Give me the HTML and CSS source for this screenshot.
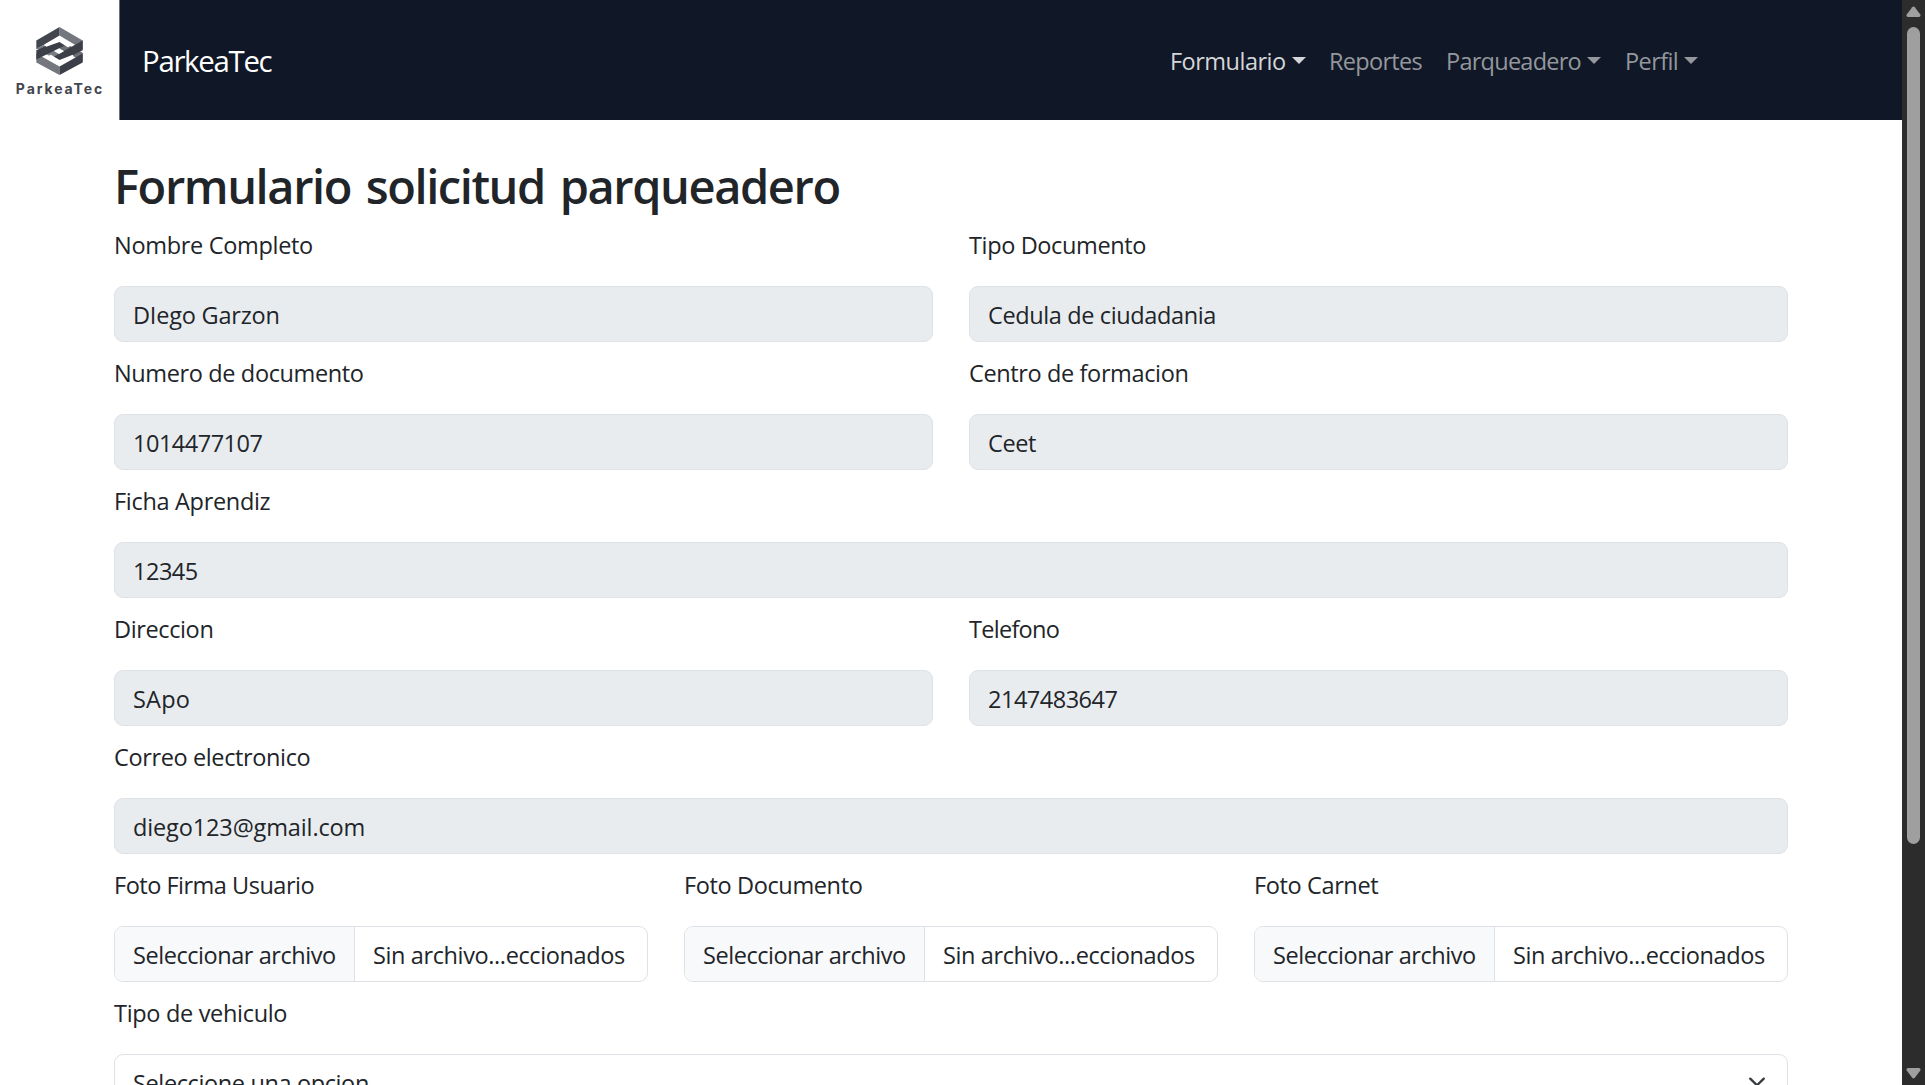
FILE: index.html
```html
<!DOCTYPE html>
<html lang="es">
<head>
<meta charset="utf-8">
<title>ParkeaTec</title>
<link rel="stylesheet" href="styles.css">
</head>
<body>
<div class="page">
  <nav class="navbar">
    <div class="logo">
      <svg class="logo-mark" viewBox="78 20 140 145" aria-hidden="true">
        <path fill="#74777e" d="M148 20 218 61V88L148 46Z"/>
        <path fill="#43464f" d="M148 20 78 61V87L148 46Z"/>
        <path fill="#7b7e84" d="M78 84 100 74 165 112 146 124Z"/>
        <path fill="#6d7077" d="M148 60 218 98V124L148 86Z"/>
        <path fill="#74777e" d="M78 100 148 139V165L78 127Z"/>
        <path fill="#3c3f48" d="M218 100V127L148 165V139Z"/>
        <path fill="#3c3f48" d="M78 90 148 60 172 72 78 118Z"/>
        <path fill="#3c3f48" d="M218 61V90L148 126 124 114Z"/>
        <path fill="#fff" d="M148 85 161 93 148 101 135 93Z"/>
        <path fill="#fff" d="M104 73 148 48 191 73 173 81 148 65 108 80Z"/>
        <path fill="#fff" d="M104 112 122 104 148 120 188 104 192 112 148 137Z"/>
      </svg>
      <span class="logo-name">ParkeaTec</span>
    </div>
    <span class="brand">ParkeaTec</span>
    <ul class="menu">
      <li class="menu-item active"><span class="w-form">Formulario</span><i class="caret"></i></li>
      <li class="menu-item"><span class="w-rep">Reportes</span></li>
      <li class="menu-item"><span class="w-parq">Parqueadero</span><i class="caret"></i></li>
      <li class="menu-item"><span class="w-perfil">Perfil</span><i class="caret"></i></li>
    </ul>
  </nav>
  <main class="container">
    <h1 class="title">Formulario solicitud parqueadero</h1>
    <form class="form">
      <div class="row">
        <div class="field"><label class="label t-loose">Nombre Completo</label><div class="control disabled t-wide">DIego Garzon</div></div>
        <div class="field"><label class="label">Tipo Documento</label><div class="control disabled">Cedula de ciudadania</div></div>
      </div>
      <div class="row">
        <div class="field"><label class="label">Numero de documento</label><div class="control disabled t-num">1014477107</div></div>
        <div class="field"><label class="label">Centro de formacion</label><div class="control disabled">Ceet</div></div>
      </div>
      <div class="row">
        <div class="field"><label class="label t-loose">Ficha Aprendiz</label><div class="control disabled t-num">12345</div></div>
      </div>
      <div class="row">
        <div class="field"><label class="label">Direccion</label><div class="control disabled t-wider">SApo</div></div>
        <div class="field"><label class="label t-tight">Telefono</label><div class="control disabled t-num">2147483647</div></div>
      </div>
      <div class="row">
        <div class="field"><label class="label">Correo electronico</label><div class="control disabled t-mail">diego123@gmail.com</div></div>
      </div>
      <div class="row">
        <div class="field"><label class="label t-num">Foto Firma Usuario</label><div class="file"><span class="file-button">Seleccionar archivo</span><span class="file-name">Sin archivo...eccionados</span></div></div>
        <div class="field"><label class="label">Foto Documento</label><div class="file"><span class="file-button">Seleccionar archivo</span><span class="file-name">Sin archivo...eccionados</span></div></div>
        <div class="field"><label class="label">Foto Carnet</label><div class="file"><span class="file-button">Seleccionar archivo</span><span class="file-name">Sin archivo...eccionados</span></div></div>
      </div>
      <div class="row">
        <div class="field"><label class="label t-loose">Tipo de vehiculo</label><div class="control select"><span>Seleccione una opcion</span>
          <svg class="chevron" viewBox="0 0 16 16" aria-hidden="true"><path fill="none" stroke="#343a40" stroke-linecap="round" stroke-linejoin="round" stroke-width="2" d="m2 5 6 6 6-6"/></svg></div></div>
      </div>
    </form>
  </main>
</div>
<aside class="scrollbar">
  <svg width="15" height="12" viewBox="0 0 15 12"><path fill="#9f9f9f" d="M6.2 1.2Q7.5-.3 8.8 1.2L14.3 8.6Q15 10.7 13 11H2Q0 10.7.7 8.6Z"/></svg>
  <div class="thumb"></div>
  <svg class="arrow-down" width="15" height="12" viewBox="0 0 15 12"><path fill="#9f9f9f" d="M6.2 10.8Q7.5 12.3 8.8 10.8L14.3 3.4Q15 1.3 13 1H2Q0 1.3.7 3.4Z"/></svg>
</aside>
</body>
</html>
```
FILE: styles.css
```css
* { box-sizing: border-box; }

body {
  margin: 0;
  height: 1085px;
  display: flex;
  overflow: hidden;
  background: #fff;
  color: #212529;
  font: 23.52px/36px "Open Sans", "Noto Sans", sans-serif;
  letter-spacing: -0.38px;
}

.page { flex: 1; height: 1085px; overflow: hidden; }

/* Navigation */
.navbar {
  display: flex;
  align-items: center;
  height: 120px;
  background: #101726;
}

.logo {
  display: flex;
  flex-direction: column;
  align-items: center;
  width: 120px;
  height: 120px;
  padding-top: 27px;
  background: #fff;
  border-right: 1px solid #6c7079;
}

.logo-mark { width: 47px; height: 48px; }

.logo-name {
  margin: 4px 0 0 1px;
  color: #43464c;
  font: 700 14px/20px Inter, sans-serif;
  letter-spacing: 1.9px;
}

.brand {
  margin-left: 22px;
  padding-top: 2px;
  color: #fff;
  font-size: 29.4px;
  letter-spacing: -1.3px;
}

.menu {
  display: flex;
  gap: 24px;
  margin: 0 204px 0 auto;
  padding: 2px 0 0;
  list-style: none;
  color: #94979d;
  letter-spacing: -0.6px;
}

.menu-item { display: flex; align-items: center; }
.menu-item.active { margin-right: -1px; color: #d4d6d9; }
.w-form { width: 116px; letter-spacing: -0.52px; }
.w-rep { width: 93px; letter-spacing: -0.7px; }
.w-parq { width: 135px; letter-spacing: -0.75px; }
.w-perfil { width: 53px; letter-spacing: -0.6px; }

.caret {
  margin: 0 0 1px 6px;
  border: 7px solid transparent;
  border-top-color: currentColor;
  border-bottom: 0;
}

/* Form */
.container { width: 1674px; margin: 0 114px; padding-top: 37px; }

.title {
  margin: 0 0 12px;
  font-size: 47px;
  font-weight: 600;
  line-height: 58px;
  letter-spacing: -1.42px;
  word-spacing: 4px;
}

.form { display: grid; gap: 13px; }
.row { display: flex; gap: 36px; }
.field { flex: 1; }
.label { display: block; margin-bottom: 23px; }

.control, .file {
  display: flex;
  height: 56px;
  border: 1px solid #dee2e6;
  border-radius: 9px;
  overflow: hidden;
  white-space: nowrap;
}

.control { padding: 10px 18px; }
.disabled { background: #e9ecef; }

.file-button {
  flex: 0 0 240px;
  padding: 10px 18px;
  background: #f8f9fa;
  border-right: 1px solid #dee2e6;
  letter-spacing: -0.45px;
}

.file-name { padding: 10px 18px; letter-spacing: -0.39px; }
.select { justify-content: space-between; }
.chevron { width: 18px; height: 18px; margin: 8px 3px 0 0; }

.t-loose { letter-spacing: -0.32px; }
.t-tight { letter-spacing: -0.72px; }
.t-wide { letter-spacing: -0.22px; }
.t-wider { letter-spacing: 0.2px; }
.t-num { letter-spacing: -0.5px; }
.t-mail { letter-spacing: -0.14px; }

/* Scrollbar */
.scrollbar {
  display: flex;
  flex-direction: column;
  align-items: center;
  width: 23px;
  height: 1085px;
  padding: 6px 0;
  background: #2c2c2c;
}

.thumb {
  width: 13px;
  height: 817px;
  margin-top: 9px;
  border-radius: 7px;
  background: #9f9f9f;
}

.arrow-down { margin-top: auto; }
```
